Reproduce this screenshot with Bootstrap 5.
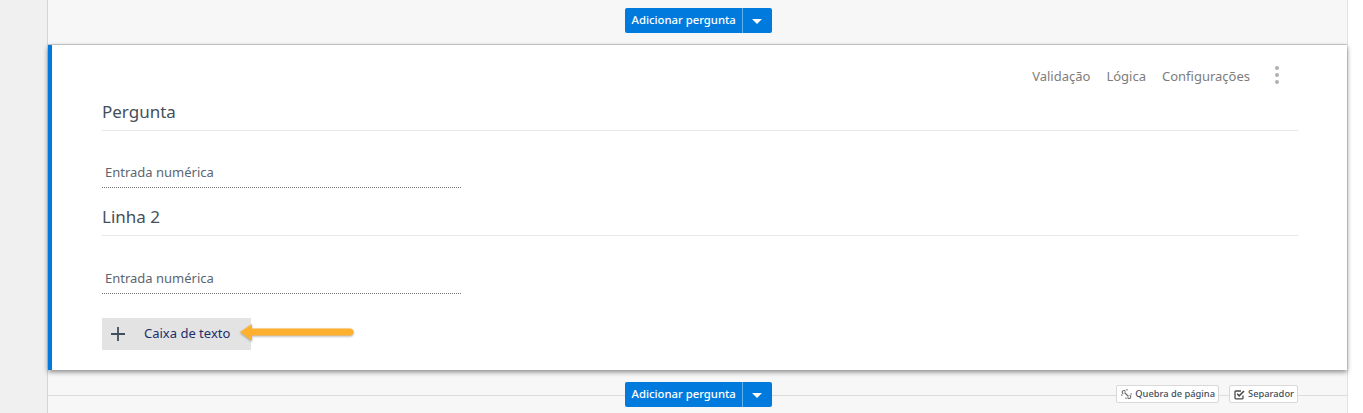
<!DOCTYPE html>
<html lang="pt">
<head>
<meta charset="UTF-8" />
<meta name="viewport" content="width=device-width, initial-scale=1" />
<title>Pergunta</title>
<link href="https://cdn.jsdelivr.net/npm/bootstrap@5.3.0/dist/css/bootstrap.min.css" rel="stylesheet" />
<style>
html, body { height: 413px; overflow: hidden; }
body { background: #fff; font-family: "Noto Sans", "Open Sans", sans-serif; color: #414f5c; }
.pagina { height: 413px; }
.lateral { width: 47px; background: #f0f0f0; flex: none; }
.miolo { width: 1301px; flex: none; background: #f7f7f7; border-left: 1px solid #d4d4d4; border-right: 1px solid #e2e2e2; }
.faixa-topo { height: 45px; border-bottom: 1px solid #cfcfcf; }
.faixa-base { height: 43px; }
.faixa-base::before { content: ""; position: absolute; left: 0; right: 0; top: 25px; border-top: 1px solid #dcdcdc; }
.grupo-add { margin-left: 1px; }
.grupo-base { margin-top: 12px; }
.btn-adicionar { font-size: 11.3px; font-weight: 500; line-height: 16px; background: #007bdd; color: #fff; border: 0; border-radius: 2px; padding: 3px 7px 5px; height: 25px; width: 118px; white-space: nowrap; }
.btn-adicionar:hover { background: #007bdd; color: #fff; }
.btn-seta { width: 30px; padding: 0; border-left: 1px solid #5db4f0 !important; }
.seta-baixo { display: inline-block; border-left: 5px solid transparent; border-right: 5px solid transparent; border-top: 5px solid #fff; vertical-align: 1px; }
.cartao { height: 325px; background: #fff; border-left: 4px solid #007bdd; box-shadow: 0 2px 5px rgba(0,0,0,.45); padding: 0 49px 0 50px; position: relative; }
.acoes { height: 55px; font-size: 13px; color: #7d7d7d; gap: 16px; padding-top: 22px; padding-right: 19px; }
.tres-pontos { display: flex; flex-direction: column; gap: 3px; margin-left: 9px; margin-top: -1px; }
.tres-pontos i { width: 4px; height: 4px; border-radius: 50%; background: #b0b0b0; display: block; }
.titulo-pergunta { font-size: 17px; line-height: 24px; margin: 0; padding-bottom: 6px; border-bottom: 1px solid #e8e8e8; color: #434f5c; font-weight: 400; }
.campo-numero { width: 359px; height: 28px; font-size: 13px; line-height: 20px; color: #5c6670; padding: 2px 3px; border-bottom: 1px dotted #777; }
.bloco-campo { padding-top: 29px; height: 74px; }
.bloco-segundo { padding-top: 30px; height: 82px; }
.btn-caixa { width: 149px; height: 32px; background: #e3e3e3; font-size: 13px; color: #1c2d6b; font-weight: 400; }
.mais { width: 42px; padding-left: 9px; display: flex; }
.btn-pequeno { height: 18px; font-size: 9.3px; font-weight: 500; line-height: 16px; background: #fff; border: 1px solid #d8d8d8; border-radius: 2px; padding: 0 3px 0 4px; color: #414f5c; white-space: nowrap; gap: 3px; }
.extras { right: 49px; top: 15px; gap: 10px; }
.seta-laranja { left: 137px; top: 2px; filter: drop-shadow(0 1px 1px rgba(0,0,0,.3)); }
</style>
</head>
<body>
<div class="d-flex pagina">
    <div class="lateral"></div>
    <div class="miolo">
        <div class="faixa-topo d-flex justify-content-center align-items-start">
            <div class="btn-group mt-2 grupo-add">
                <button type="button" class="btn btn-adicionar">Adicionar pergunta</button>
                <button type="button" class="btn btn-adicionar btn-seta"><span class="seta-baixo"></span></button>
            </div>
        </div>

        <div class="cartao">
            <div class="acoes d-flex justify-content-end align-items-start">
                <span>Validação</span>
                <span>Lógica</span>
                <span>Configurações</span>
                <span class="tres-pontos"><i></i><i></i><i></i></span>
            </div>
            <h5 class="titulo-pergunta">Pergunta</h5>
            <div class="bloco-campo"><div class="campo-numero">Entrada numérica</div></div>
            <h5 class="titulo-pergunta">Linha 2</h5>
            <div class="bloco-segundo"><div class="campo-numero">Entrada numérica</div></div>
            <div class="btn-caixa d-flex align-items-center position-relative">
                <span class="mais">
                    <svg width="14" height="14" viewBox="0 0 14 14"><path d="M7 0v14M0 7h14" stroke="#414f5c" stroke-width="1.8" fill="none"/></svg>
                </span>
                <span>Caixa de texto</span>
                <svg class="position-absolute seta-laranja" width="120" height="24" viewBox="0 0 120 24"><path d="M1 12 L13 4 V8.5 H111 a3.5 3.5 0 0 1 0 7 H13 V21 Z" fill="#ffb02e"/></svg>
            </div>
        </div>

        <div class="faixa-base position-relative d-flex justify-content-center align-items-start">
            <div class="btn-group position-relative grupo-base grupo-add">
                <button type="button" class="btn btn-adicionar">Adicionar pergunta</button>
                <button type="button" class="btn btn-adicionar btn-seta"><span class="seta-baixo"></span></button>
            </div>
            <div class="extras position-absolute d-flex">
                <span class="btn-pequeno d-flex align-items-center">
                    <!-- corrente quebrada -->
                    <svg width="11" height="11" viewBox="0 0 11 11" fill="none" stroke="#6a6a6a" stroke-width="1.1"><path d="M4.5 2.5 3.6 1.6a1.7 1.7 0 0 0-2.2 2.3l.9.9M6.5 8.5l.9.9a1.7 1.7 0 0 0 2.2-2.3l-.9-.9M3.5 3.5l4 4M0 6h1.5M5 10V8.500M11 5H9.500M6 0v1.500"/></svg>Quebra de página
                </span>
                <span class="btn-pequeno d-flex align-items-center">
                    <svg width="11" height="11" viewBox="0 0 11 11" fill="none" stroke="#4a4a4a" stroke-width="1.3"><path d="M9 6.500V9a.8.8 0 0 1-.8.8H1.800A.8.8 0 0 1 1 9V2.800A.8.8 0 0 1 1.800 2H7"/><path d="M3.200 4.800 5.200 6.800 10 2" stroke-width="1.600"/></svg>Separador
                </span>
            </div>
        </div>
    </div>
</div>
</body>
</html>
